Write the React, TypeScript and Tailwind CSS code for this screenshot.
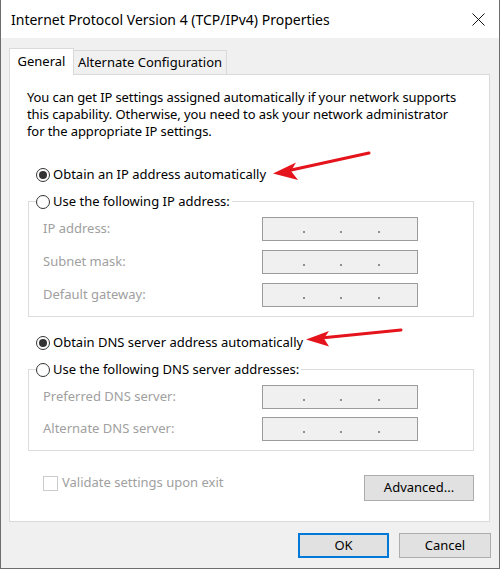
import React from "react";

const font = { fontFamily: '"Noto Sans", "Open Sans", sans-serif' };

function Radio({ checked, label }: { checked?: boolean; label: string }) {
  return (
    <div className="flex items-center h-[17px] bg-white pr-[2px]">
      <span className="w-[14px] h-[14px] rounded-full border border-[#333] bg-white flex items-center justify-center">
        {checked && <span className="w-[8px] h-[8px] rounded-full bg-[#333]" />}
      </span>
      <span className="ml-[3px] text-[13px] text-black">{label}</span>
    </div>
  );
}

function IpBox() {
  return (
    <div className="w-[156px] h-[24px] border border-[#9c9c9c] bg-[#f0f0f0] flex items-end pb-[7px]">
      <span className="ml-[40px] w-[2px] h-[2px] bg-[#8f8f8f]" />
      <span className="ml-[35px] w-[2px] h-[2px] bg-[#8f8f8f]" />
      <span className="ml-[36px] w-[2px] h-[2px] bg-[#8f8f8f]" />
    </div>
  );
}

function Row({ label }: { label: string }) {
  return (
    <div className="flex items-center">
      <span className="w-[219px] text-[13px] text-[#a0a0a0]">{label}</span>
      <IpBox />
    </div>
  );
}

function Group({ legend, rows, gap }: { legend: string; rows: string[]; gap: string }) {
  return (
    <div className="border border-[#dcdcdc] mr-[15px] ml-[18px] pb-[9px]">
      <div className="-mt-[9px] ml-[7px] w-fit">
        <Radio label={legend} />
      </div>
      <div className={`mt-[7px] pl-[14px] flex flex-col ${gap}`}>
        {rows.map((r) => (
          <Row key={r} label={r} />
        ))}
      </div>
    </div>
  );
}

export default function App() {
  return (
    <div
      className="relative w-[500px] h-[569px] flex flex-col bg-[#f0f0f0] border-x border-b border-[#6d6d6d]"
      style={font}
    >
      <div className="h-[38px] bg-white flex items-center justify-between pl-[10px] pr-[14px]">
        <span className="text-[14px] text-black">Internet Protocol Version 4 (TCP/IPv4) Properties</span>
        <svg width="13" height="13" viewBox="0 0 13 13">
          <path d="M0.5 0.5 L12.5 12.5 M12.5 0.5 L0.5 12.5" stroke="#111" strokeWidth="1" />
        </svg>
      </div>

      <div className="mt-[10px] pl-[8px] pr-[9px] flex flex-col">
        <div className="flex items-end h-[26px]">
          <div className="relative z-10 h-[27px] -mb-[1px] w-[65px] bg-white border-x border-t border-[#d9d9d9] flex items-center justify-center text-[13px] text-black pb-[1px]">
            General
          </div>
          <div className="h-[24px] w-[153px] bg-[#f0f0f0] border-r border-t border-[#d9d9d9] flex items-center justify-center text-[13px] text-black">
            Alternate Configuration
          </div>
        </div>

        <div className="h-[448px] bg-white border border-[#d9d9d9] flex flex-col">
          <p className="mt-[14px] ml-[17px] w-[435px] text-[13px] leading-[17px] tracking-[-0.1px] text-black">
            You can get IP settings assigned automatically if your network supports this capability. Otherwise, you need to ask your network administrator for the appropriate IP settings.
          </p>

          <div className="mt-[26px] ml-[26px] w-fit">
            <Radio checked label="Obtain an IP address automatically" />
          </div>
          <div className="mt-[18px]">
            <Group
              legend="Use the following IP address:"
              rows={["IP address:", "Subnet mask:", "Default gateway:"]}
              gap="gap-[9px]"
            />
          </div>

          <div className="mt-[17px] ml-[26px] w-fit">
            <Radio checked label="Obtain DNS server address automatically" />
          </div>
          <div className="mt-[18px]">
            <Group
              legend="Use the following DNS server addresses:"
              rows={["Preferred DNS server:", "Alternate DNS server:"]}
              gap="gap-[8px]"
            />
          </div>

          <div className="mt-[24px] ml-[33px] mr-[15px] flex items-start justify-between">
            <div className="flex items-center h-[16px]">
              <span className="w-[15px] h-[15px] border border-[#cccccc] bg-white" />
              <span className="ml-[4px] text-[13px] text-[#a0a0a0]">Validate settings upon exit</span>
            </div>
            <button className="w-[110px] h-[26px] bg-[#e1e1e1] border border-[#adadad] text-[13px] text-black">
              Advanced...
            </button>
          </div>
        </div>
      </div>

      <div className="mt-[11px] flex justify-end gap-[10px] pr-[8px]">
        <button className="w-[91px] h-[25px] bg-[#e1e1e1] border-2 border-[#0078d7] text-[13px] text-black">OK</button>
        <button className="w-[92px] h-[25px] bg-[#e1e1e1] border border-[#adadad] text-[13px] text-black">Cancel</button>
      </div>

      <svg className="absolute left-0 top-0 pointer-events-none" width="500" height="569">
        <line x1="368" y1="153" x2="288" y2="170.5" stroke="#e5141c" strokeWidth="3" strokeLinecap="round" />
        <polygon points="272,173.5 295,162.5 290,171 297,180" fill="#e5141c" />
        <line x1="400" y1="330" x2="320" y2="338" stroke="#e5141c" strokeWidth="3" strokeLinecap="round" />
        <polygon points="305,339.5 328,331 323,338.5 328,346.5" fill="#e5141c" />
      </svg>
    </div>
  );
}
